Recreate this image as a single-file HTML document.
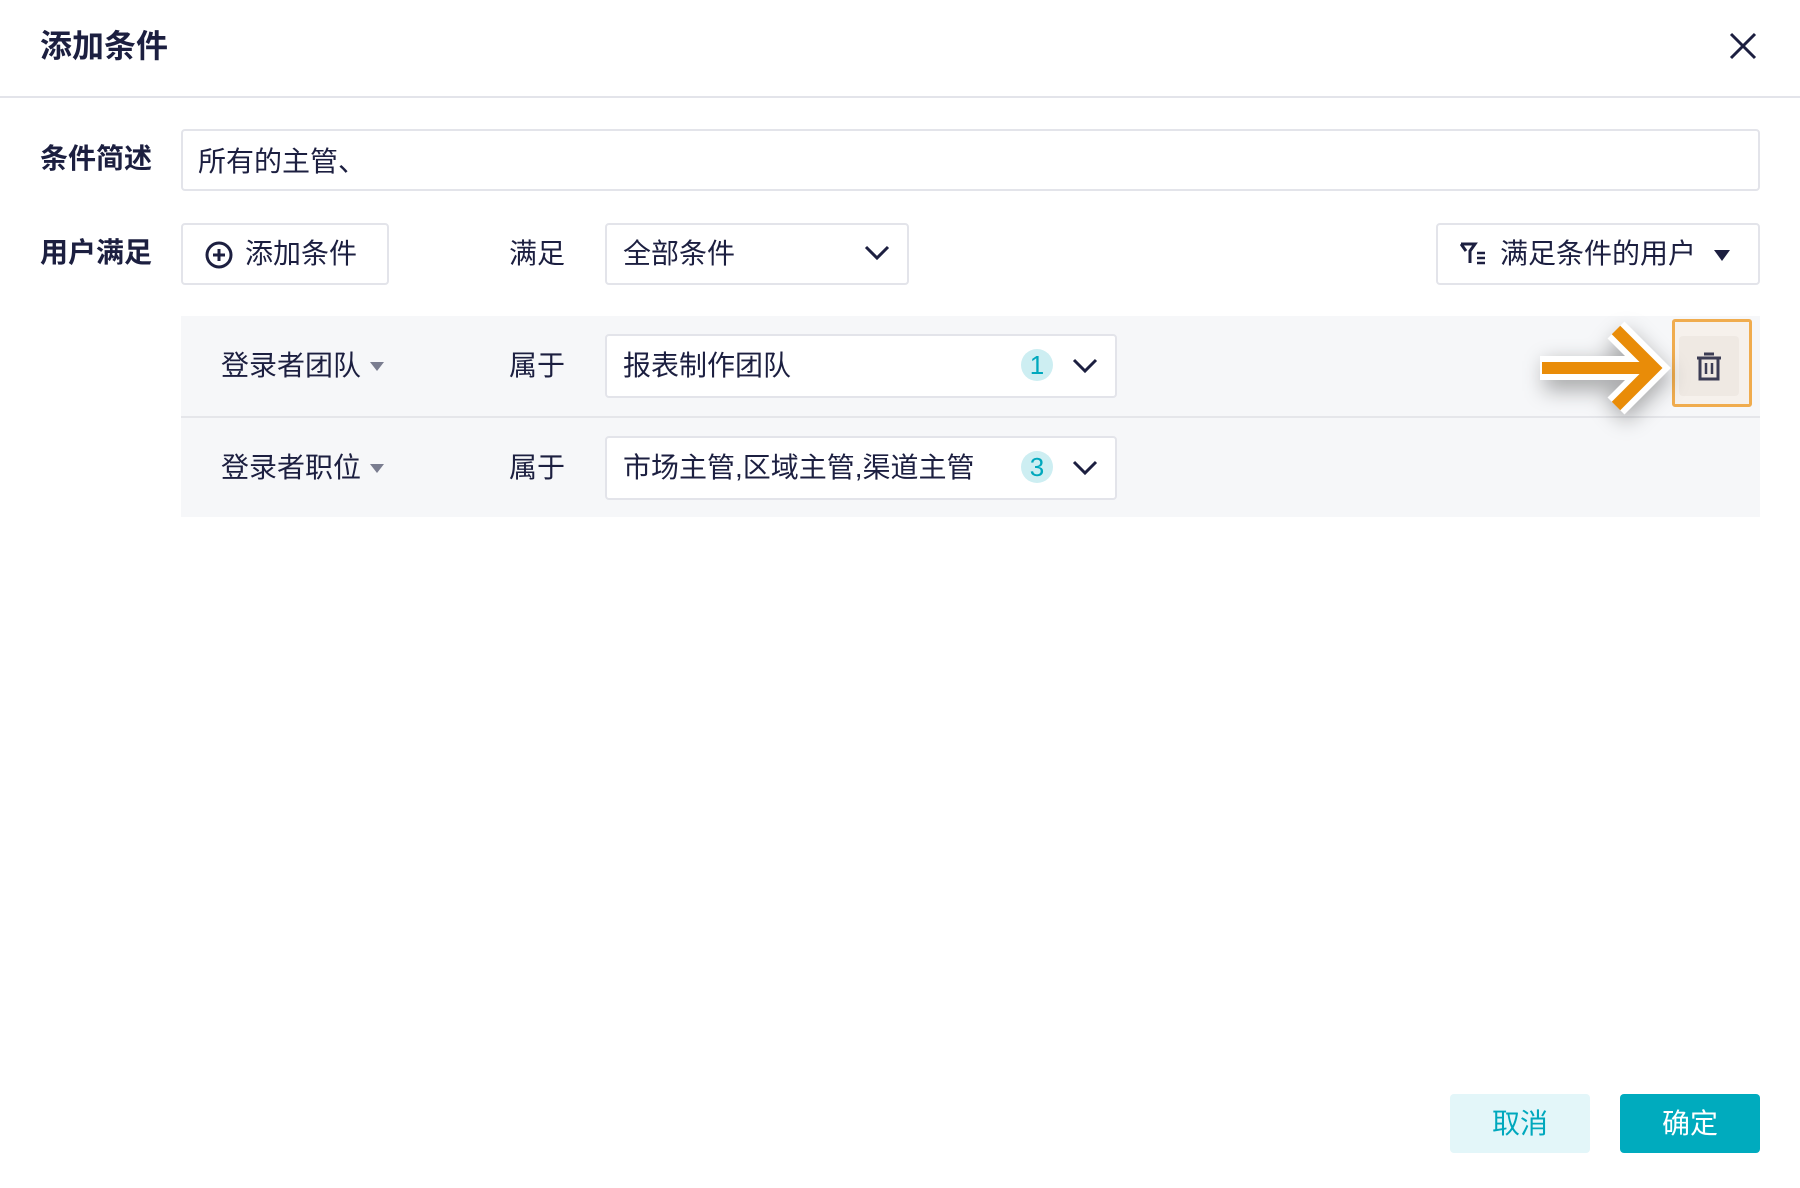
<!DOCTYPE html>
<html><head><meta charset="utf-8"><style>
*{box-sizing:border-box;margin:0;padding:0}
body{width:1800px;height:1188px;background:#fff;font-family:"Liberation Sans","Noto Sans CJK SC",sans-serif;color:#1c1f40;position:relative;overflow:hidden;font-size:28px}
.a{position:absolute}
.box{position:absolute;border:2px solid #e3e4ea;border-radius:4px;background:#fff}
.lbl{position:absolute;font-weight:bold;font-size:28px;line-height:1}
.t{position:absolute;line-height:1}
.tri{position:absolute;width:0;height:0;border-left:7px solid transparent;border-right:7px solid transparent;border-top:9px solid #7a7d90}
.badge{position:absolute;width:32px;height:32px;border-radius:50%;background:#cdeef2;color:#00a8bd;font-size:26px;text-align:center;line-height:32px}
</style></head><body>
<div class="t" style="left:40px;top:30px;font-size:32px;font-weight:bold">添加条件</div>
<svg class="a" style="left:1729px;top:32px" width="28" height="28" viewBox="0 0 28 28"><path d="M2 2L26 26M26 2L2 26" stroke="#1c1f40" stroke-width="3"/></svg>
<div class="a" style="left:0;top:96px;width:1800px;height:2px;background:#e3e4ea"></div>

<div class="lbl" style="left:40px;top:145px">条件简述</div>
<div class="box" style="left:181px;top:129px;width:1579px;height:62px"></div>
<div class="t" style="left:198px;top:148px">所有的主管、</div>

<div class="lbl" style="left:40px;top:239px">用户满足</div>
<div class="box" style="left:181px;top:223px;width:208px;height:62px"></div>
<svg class="a" style="left:204px;top:240px" width="30" height="30" viewBox="0 0 30 30"><circle cx="15" cy="15" r="12" fill="none" stroke="#1c1f40" stroke-width="3"/><path d="M15 9v12M9 15h12" stroke="#1c1f40" stroke-width="3"/></svg>
<div class="t" style="left:245px;top:240px">添加条件</div>
<div class="t" style="left:509px;top:240px">满足</div>
<div class="box" style="left:605px;top:223px;width:304px;height:62px"></div>
<div class="t" style="left:623px;top:240px">全部条件</div>
<svg class="a" style="left:864px;top:244px" width="26" height="18" viewBox="0 0 26 18"><path d="M2 3l11 11L24 3" fill="none" stroke="#1c1f40" stroke-width="3"/></svg>
<div class="box" style="left:1436px;top:223px;width:324px;height:62px"></div>
<svg class="a" style="left:1460px;top:242px" width="26" height="24" viewBox="0 0 26 24"><path d="M1 2h14l-5 7v12M6 9L1 2" fill="none" stroke="#1c1f40" stroke-width="3"/><path d="M17 11h8M17 16h8M17 21h8" stroke="#1c1f40" stroke-width="2.5"/></svg>
<div class="t" style="left:1500px;top:240px">满足条件的用户</div>
<div class="a" style="left:1714px;top:250px;width:0;height:0;border-left:8px solid transparent;border-right:8px solid transparent;border-top:11px solid #1c1f40"></div>

<div class="a" style="left:181px;top:316px;width:1579px;height:201px;background:#f6f7f9"></div>
<div class="a" style="left:181px;top:416px;width:1579px;height:2px;background:#e5e6ea"></div>

<div class="t" style="left:221px;top:352px">登录者团队</div>
<div class="tri" style="left:370px;top:362px"></div>
<div class="t" style="left:509px;top:352px">属于</div>
<div class="box" style="left:605px;top:334px;width:512px;height:64px"></div>
<div class="t" style="left:623px;top:352px">报表制作团队</div>
<div class="badge" style="left:1021px;top:349px">1</div>
<svg class="a" style="left:1072px;top:357px" width="26" height="18" viewBox="0 0 26 18"><path d="M2 3l11 11L24 3" fill="none" stroke="#1c1f40" stroke-width="3"/></svg>

<div class="t" style="left:221px;top:454px">登录者职位</div>
<div class="tri" style="left:370px;top:464px"></div>
<div class="t" style="left:509px;top:454px">属于</div>
<div class="box" style="left:605px;top:436px;width:512px;height:64px"></div>
<div class="t" style="left:623px;top:454px">市场主管,区域主管,渠道主管</div>
<div class="badge" style="left:1021px;top:451px">3</div>
<svg class="a" style="left:1072px;top:459px" width="26" height="18" viewBox="0 0 26 18"><path d="M2 3l11 11L24 3" fill="none" stroke="#1c1f40" stroke-width="3"/></svg>

<div class="a" style="left:1672px;top:319px;width:80px;height:88px;border:3px solid #f0ac4e;border-radius:3px;background:#f6f1ec"></div>
<div class="a" style="left:1679px;top:336px;width:60px;height:60px;background:#efe9e3;border-radius:4px"></div>
<svg class="a" style="left:1695px;top:352px" width="28" height="30" viewBox="0 0 28 30"><path d="M9 2h10M2 6h24" stroke="#3c3d55" stroke-width="3"/><path d="M5 6v21h18V6" fill="none" stroke="#3c3d55" stroke-width="3"/><path d="M11 11v11M17 11v11" stroke="#3c3d55" stroke-width="2.5"/></svg>

<svg class="a" style="left:1520px;top:310px;overflow:visible" width="160" height="120" viewBox="0 0 160 120">
<defs><filter id="s" x="-40%" y="-40%" width="180%" height="180%"><feGaussianBlur stdDeviation="10"/></filter></defs>
<path d="M24 58h104M96 22l36 36-36 36" fill="none" stroke="#000" stroke-opacity=".3" stroke-width="30" filter="url(#s)" transform="translate(0,8)"/>
<path d="M20 58h110M96 20l38 38-38 38" fill="none" stroke="#fff" stroke-width="24" stroke-linejoin="miter"/>
<path d="M22 58h106M96 20l38 38-38 38" fill="none" stroke="#e98c08" stroke-width="12"/>
</svg>

<div class="a" style="left:1450px;top:1094px;width:140px;height:59px;background:#e3f6f9;border-radius:4px;color:#00a8bd;text-align:center;line-height:59px;font-size:28px">取消</div>
<div class="a" style="left:1620px;top:1094px;width:140px;height:59px;background:#00abbe;border-radius:4px;color:#fff;text-align:center;line-height:59px;font-size:28px">确定</div>
</body></html>
